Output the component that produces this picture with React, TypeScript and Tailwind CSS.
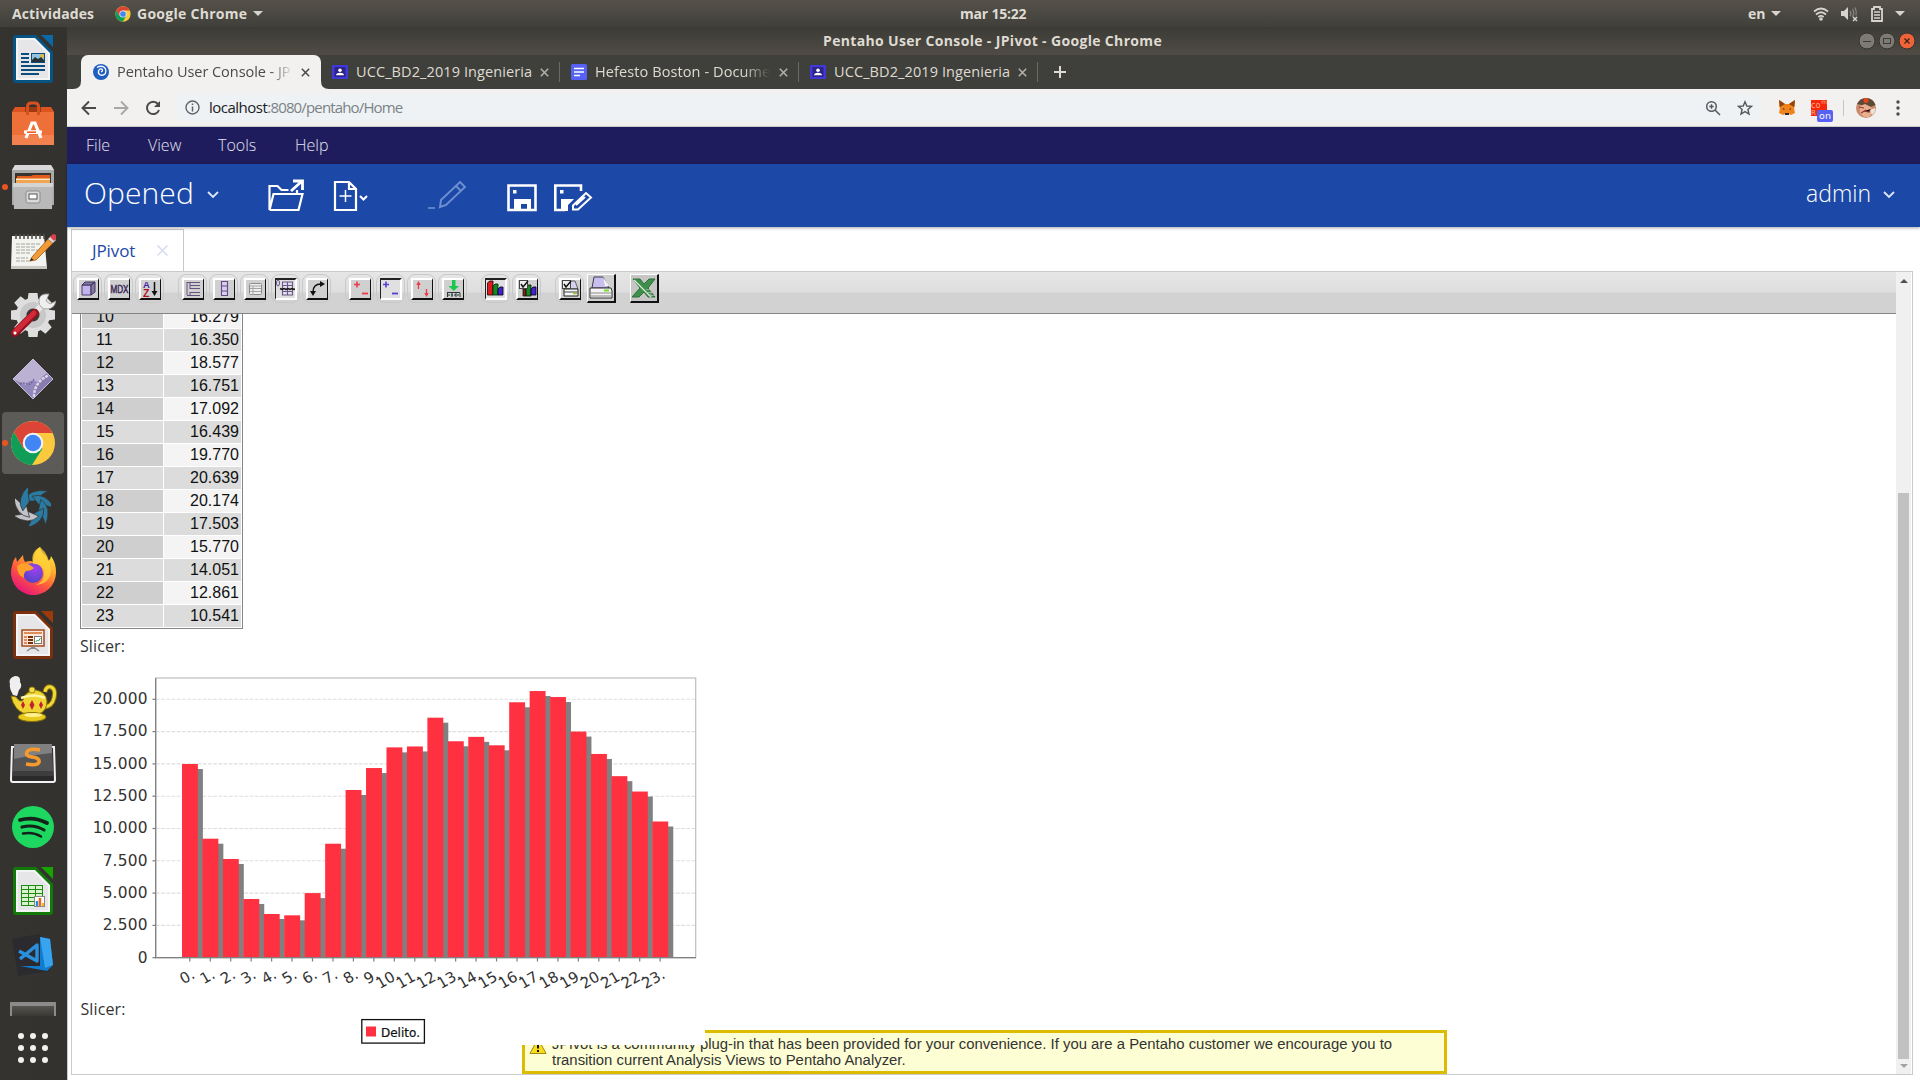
import type { ReactNode } from "react";

/* ---------- Dock icons ---------- */

function OfficeDoc({ dark, light, children }: { dark: string; light: string; children: ReactNode }) {
  return (
    <svg width="40" height="48" viewBox="0 0 40 48">
      <path d="M3 0H23L40 17V45a3 3 0 0 1-3 3H3a3 3 0 0 1-3-3V3a3 3 0 0 1 3-3Z" fill={dark} />
      <path d="M28 0H40V12Z" fill={light} />
      <path d="M3 3H22L37 18V45H3Z" fill="#f4f4f4" />
      <path d="M5 5H21L35 19V43H5Z" fill="#e6e6e8" />
      {children}
    </svg>
  );
}

function Writer() {
  return (
    <OfficeDoc dark="#075383" light="#0a6aa5">
      <path d="M8 19h8M8 23h8M8 27h8M8 31h24M8 35h24M8 39h18" stroke="#0b4d7c" strokeWidth="2" />
      <rect x="18" y="18" width="14" height="10" fill="#0b4d7c" />
      <rect x="19" y="19" width="12" height="8" fill="#8fc4e4" />
      <circle cx="29" cy="21" r="2" fill="#e8b830" />
      <path d="M19 27v-2l3-3 3 2 3-2 3 3v2Z" fill="#263238" />
    </OfficeDoc>
  );
}

function Software() {
  return (
    <svg width="42" height="44" viewBox="0 0 42 44">
      <path d="M3 6H39L42 11H0Z" fill="#9e3a12" />
      <path d="M3 6h10v5H0ZM29 6h10l3 5H29Z" fill="#dc5520" />
      <rect y="11" width="42" height="33" fill="#ee7038" />
      <rect y="34" width="42" height="10" fill="#f38150" />
      <path d="M15.500 14V6q0-4 3.500-4h4q3.500 0 3.500 4v8" fill="none" stroke="#d85020" strokeWidth="3" />
      <path d="M14 37l6-15h3l6 15M12 31h18" fill="none" stroke="#fff" strokeWidth="3.200" />
      <rect x="12.500" y="29.500" width="17" height="3.500" rx="1.700" fill="#fff" />
      <path d="M15 31.200h9" stroke="#ee5a20" strokeWidth="1.600" />
    </svg>
  );
}

function Files() {
  return (
    <svg width="42" height="44" viewBox="0 0 42 44">
      <path d="M3 0H39L42 5V40H0V5Z" fill="#a9a9a9" />
      <path d="M3 0H39L42 5H0Z" fill="#d8d8d8" />
      <rect x="3" y="8" width="36" height="12" fill="#38332f" />
      <path d="M5 11h14l2-1h17v4H5Z" fill="#e35b1d" />
      <path d="M4 13h34v5H4Z" fill="#f1a453" />
      <path d="M4 14.500h34" stroke="#fbe7cf" />
      <path d="M1 18H41L40 44H2Z" fill="#b9b9b9" />
      <path d="M1 18H41v4H1Z" fill="#d4d4d4" />
      <rect x="14" y="26" width="14" height="12" rx="2" fill="#d9d9d9" stroke="#8d8d8d" />
      <rect x="17" y="29" width="8" height="5" fill="#fff" stroke="#555" />
    </svg>
  );
}

function Notes() {
  return (
    <svg width="46" height="38" viewBox="0 0 46 38">
      <path d="M2 4H34L37 36H1Z" fill="#f3f3ef" />
      <path d="M1 34H37v3H1Z" fill="#c9c9c2" />
      <path d="M6 2v5M10 2v5M14 2v5M18 2v5M22 2v5M26 2v5M30 2v5M34 2v5" stroke="#55534f" strokeWidth="1.600" />
      <path d="M6 12h24M6 15h20M6 18h22M6 21h14M6 26h12M6 29h14" stroke="#a5a5a0" strokeDasharray="4 1" />
      <path d="M22 25L38 7l5 4L26 28l-6 1Z" fill="#f19a37" stroke="#9c5b12" strokeWidth=".8" />
      <path d="M38 7l3-3 5 4-3 3Z" fill="#dcdcdc" />
      <path d="M40 5l3-3q3 0 4 3l-3 4Z" fill="#dc4049" />
      <path d="M20 29l1.500-3 2 2Z" fill="#222" />
    </svg>
  );
}

const gearTeeth = [0, 45, 90, 135, 180, 225, 270, 315];

function Settings() {
  return (
    <svg width="46" height="46" viewBox="0 0 46 46">
      <g fill="#dedede">
        {gearTeeth.map((a) => (
          <path key={a} d="M17.500 9L18.500 1h9l1 8Z" transform={`rotate(${a} 23 23)`} />
        ))}
        <circle cx="23" cy="23" r="17" />
      </g>
      <circle cx="23" cy="23" r="13" fill="#c8c8c8" />
      <circle cx="23" cy="23" r="6.500" fill="#3a3834" />
      <path d="M24 22L32 13" stroke="#e9e9e9" strokeWidth="6" />
      <path d="M39 2Q29 1 29 9q0 8 8 8 7 0 9-8l-6 3-4-3Z" fill="#efefef" stroke="#9a9a9a" strokeWidth=".8" strokeLinejoin="round" />
      <path d="M5 41L25 21" stroke="#8e1420" strokeWidth="8" strokeLinecap="round" />
      <path d="M5 40L24 21" stroke="#d22a38" strokeWidth="5" strokeLinecap="round" />
      <circle cx="5" cy="41" r="1.500" fill="#fff" />
    </svg>
  );
}

function Diamond() {
  return (
    <svg width="42" height="42" viewBox="0 0 42 42">
      <path d="M21 1L41 21L21 41L1 21Z" fill="#9388bb" />
      <path d="M21 1L41 21L34 28Q18 18 14 27L1 21Z" fill="#bab1d3" />
      <path d="M41 21L21 41L23 30Q26 21 35 15Z" fill="#8a7cae" />
      <path d="M22 39q0-15 15-22" fill="none" stroke="#dcd6ea" strokeWidth="2.500" strokeDasharray="3 1" />
      <path d="M8 26q4-2 7 0t7-5" fill="none" stroke="#7465a0" strokeWidth="1.400" strokeDasharray="2 1" />
      <path d="M21 1L41 21L21 41L1 21Z" fill="none" stroke="#c4bddb" />
    </svg>
  );
}

function Chrome({ size }: { size: number }) {
  return (
    <svg width={size} height={size} viewBox="0 0 46 46">
      <circle cx="23" cy="23" r="22" fill="#fbc93d" />
      <path d="M23 23L13.500 28.500L4 12A22 22 0 0 0 22 45L32.500 28.500Z" fill="#0f9d58" />
      <path d="M4 12A22 22 0 0 1 42.500 13H23L13.500 28.500Z" fill="#db4437" />
      <circle cx="23" cy="23" r="10.300" fill="#f4f4f4" />
      <circle cx="23" cy="23" r="8.200" fill="#4285f4" />
    </svg>
  );
}

const blades = [0, 51, 102, 153, 204, 255, 306];

function Pinwheel() {
  return (
    <svg width="36" height="38" viewBox="0 0 36 38">
      {blades.map((a) => (
        <path
          key={a}
          d="M9 13Q14 0 33 3Q25 7 20 13Z"
          transform={`rotate(${a} 18 19)`}
          fill={a === 255 || a === 204 ? "#c2c3c8" : "#2b7aa2"}
          stroke="#33322e"
          strokeWidth=".7"
        />
      ))}
      <circle cx="18" cy="19" r="5.500" fill="#33322e" />
    </svg>
  );
}

function Firefox() {
  return (
    <svg width="46" height="48" viewBox="0 0 46 48">
      <defs>
        <linearGradient id="ff" x1=".9" y1="0" x2=".3" y2="1">
          <stop offset="0" stopColor="#fff44f" />
          <stop offset=".35" stopColor="#ffb02e" />
          <stop offset=".65" stopColor="#ff5a3c" />
          <stop offset="1" stopColor="#e5147c" />
        </linearGradient>
        <radialGradient id="fp" cx=".6" cy=".3" r=".8">
          <stop offset="0" stopColor="#a040f0" />
          <stop offset="1" stopColor="#4a45c0" />
        </radialGradient>
      </defs>
      <path d="M30 0q1 6 6 9 1 2 2 5 3-2 3-5 5 7 5 16A22.500 22.500 0 1 1 2 19q1-6 4-9l1 5 6-7q0 4 2 7 6-2 8 0Q23 5 30 0Z" fill="url(#ff)" />
      <circle cx="23" cy="26" r="10" fill="url(#fp)" />
      <path d="M7 19q6-5 13-1l4 3q-3 3-8 3-3 3-2 7-7-3-7-12Z" fill="#ffa12b" />
      <path d="M30 0q-10 5-7 17 9-1 11 8 1 9-8 13 13-1 15-13Q40 8 30 0Z" fill="#ffd53a" opacity=".75" />
    </svg>
  );
}

function Impress() {
  return (
    <OfficeDoc dark="#7a2f0d" light="#9c3a0c">
      <rect x="9" y="19" width="22" height="16" fill="#fbe9dd" stroke="#a44b1e" strokeWidth="1.500" />
      <path d="M11 22h18" stroke="#e08d5c" strokeWidth="2" />
      <path d="M11 26h3M11 29h3M11 32h3" stroke="#e8875b" strokeWidth="2" />
      <path d="M15 26h5M15 29h5M15 32h5" stroke="#7a2f0d" strokeWidth="2" />
      <rect x="21.500" y="25.500" width="7" height="7" fill="#fff" stroke="#777" />
      <path d="M22.500 31l2-2 1 1 2-3" stroke="#2ca344" fill="none" />
      <path d="M20 35v3M14 40l6-4 6 4" stroke="#888" fill="none" strokeWidth="1.500" />
    </OfficeDoc>
  );
}

function Teapot() {
  return (
    <svg width="48" height="48" viewBox="0 0 48 48">
      <path d="M4 20Q0 14 1 9-1 3 6 1q6 0 5 6 3 4-1 8l-2 6Z" fill="#efefef" />
      <path d="M36 17q1-6 6-5 5 2 3 11-2 9-11 9" fill="none" stroke="#8a7306" strokeWidth="5" />
      <path d="M36 17q1-6 6-5 5 2 3 11-2 9-11 9" fill="none" stroke="#f0d838" strokeWidth="3" />
      <path d="M2 21l5 1q4 6 7 3 2-9 13-10 10 2 11 11 0 10-8 13H16Q5 35 2 21Z" fill="#efd433" stroke="#8a7306" />
      <ellipse cx="23" cy="42" rx="14" ry="4.500" fill="#e8c91d" stroke="#8a7306" />
      <ellipse cx="24" cy="40" rx="9" ry="2" fill="#fff08a" />
      <path d="M12 23q13-5 24 0" fill="none" stroke="#fff6a6" strokeWidth="2.500" />
      <circle cx="23" cy="15" r="3" fill="#f4de4c" stroke="#a08a10" />
      <path d="M14 26l2 4-2 4-2-4ZM23 25l2.500 5-2.500 5-2.500-5ZM32 26l2 4-2 4-2-4Z" fill="#c4202c" />
    </svg>
  );
}

function Sublime() {
  return (
    <svg width="46" height="40" viewBox="0 0 46 40">
      <path d="M2 4H44L45 37q0 2-2 2H3q-2 0-2-2Z" fill="#2a2a2a" stroke="#f2f2f2" strokeWidth="2" />
      <path d="M4 1H42L43 28H3Z" fill="#545454" />
      <path d="M4 1H42V10Q20 12 4 16Z" fill="#808080" />
      <path d="M3 28H43v5H3Z" fill="#3d3d3d" />
      <path d="M30 7Q19 5 17 9t5 5q8 1 7 5t-13 2" fill="none" stroke="#f79a2e" strokeWidth="3.600" />
    </svg>
  );
}

function Spotify() {
  return (
    <svg width="42" height="42" viewBox="0 0 42 42">
      <circle cx="21" cy="21" r="21" fill="#1ed760" />
      <g fill="none" stroke="#14231a" strokeLinecap="round">
        <path d="M8 14q14-4 27 3" strokeWidth="3.800" />
        <path d="M10 21q12-3 22 3" strokeWidth="3.200" />
        <path d="M11 27.500q10-2 18 3" strokeWidth="2.600" />
      </g>
    </svg>
  );
}

function Calc() {
  return (
    <OfficeDoc dark="#13780a" light="#18a303">
      <rect x="8" y="18" width="22" height="21" fill="#1f8a12" />
      <g fill="#d9f3cf">
        {[19, 23, 27, 31, 35].map((y) => (
          <g key={y}>
            <rect x="9" y={y} width="6" height="3" />
            <rect x="16" y={y} width="6" height="3" />
            <rect x="23" y={y} width="6" height="3" />
          </g>
        ))}
      </g>
      <rect x="21.500" y="29.500" width="10" height="10" fill="#fff" stroke="#888" />
      <path d="M24 39v-5" stroke="#2f86d0" strokeWidth="2.500" />
      <path d="M27 39v-8" stroke="#e8641b" strokeWidth="2.500" />
      <path d="M30 39v-3" stroke="#f2b52a" strokeWidth="2" />
    </OfficeDoc>
  );
}

function VsCode() {
  return (
    <svg width="42" height="44" viewBox="0 0 42 44">
      <path d="M0 6L28 1L38 38L6 43Z" fill="#2b2a2e" />
      <path d="M28 4L38 6 41 32 35 38 8 33H28Z" fill="#0f7ccd" />
      <path d="M28 4L38 6 41 32 33 35Z" fill="#38a3ee" />
      <path d="M7 18l18 10V12L8 26" fill="none" stroke="#2a8fdc" strokeWidth="3.500" strokeLinejoin="round" />
    </svg>
  );
}

const dockIcons: { name: string; icon: ReactNode; running?: boolean; active?: boolean }[] = [
  { name: "writer", icon: <Writer /> },
  { name: "software", icon: <Software /> },
  { name: "files", icon: <Files />, running: true },
  { name: "notes", icon: <Notes /> },
  { name: "settings", icon: <Settings /> },
  { name: "diamond", icon: <Diamond /> },
  { name: "chrome", icon: <Chrome size={46} />, running: true, active: true },
  { name: "pinwheel", icon: <Pinwheel /> },
  { name: "firefox", icon: <Firefox /> },
  { name: "impress", icon: <Impress /> },
  { name: "teapot", icon: <Teapot /> },
  { name: "sublime", icon: <Sublime /> },
  { name: "spotify", icon: <Spotify /> },
  { name: "calc", icon: <Calc /> },
  { name: "vscode", icon: <VsCode /> },
];

function Dock() {
  return (
    <aside className="flex w-[67px] shrink-0 flex-col bg-linear-to-r from-[#34332f] to-[#33322e] pr-px">
      {dockIcons.map((d) => (
        <div key={d.name} className="relative flex h-16 items-center justify-center">
          {d.running && <span className="absolute left-[2px] top-[29px] z-10 size-[6px] rounded-full bg-[#e95420]" />}
          <div className={d.active ? "flex size-[62px] items-center justify-center rounded-[4px] bg-[#5c5b58]" : "flex size-[62px] items-center justify-center"}>
            {d.icon}
          </div>
        </div>
      ))}
      <div className="mx-auto mt-[15px] h-[14px] w-[46px] border-x-2 border-t-4 border-[#8c8b89] bg-linear-to-b from-[#55544f] to-[#3a3935]" />
      <div className="mx-auto mt-[17px] grid grid-cols-3 gap-[6px]">
        {[0, 1, 2, 3, 4, 5, 6, 7, 8].map((i) => (
          <span key={i} className="size-[6px] rounded-full bg-[#f2f1f0]" />
        ))}
      </div>
    </aside>
  );
}

/* ---------- System bar ---------- */

function Caret() {
  return (
    <svg width="10" height="5" viewBox="0 0 10 5" className="shrink-0">
      <path d="M0 0H10L5 5Z" fill="#d6d3cc" />
    </svg>
  );
}

function SystemBar() {
  return (
    <header className="flex h-[27px] items-center bg-linear-to-b from-[#56524b] to-[#403f3a] font-['Open_Sans'] text-[14px] font-bold text-[#dfdbd2]">
      <span className="ml-[12px] w-[103px] tracking-[0.12px]">Actividades</span>
      <Chrome size={16} />
      <span className="ml-[6px] w-[116px] tracking-[0.28px]">Google Chrome</span>
      <Caret />
      <span className="ml-[697px] w-[788px] tracking-[-0.2px]">mar 15:22</span>
      <span className="w-[23px]">en</span>
      <Caret />
      <svg width="16" height="14" viewBox="0 0 16 14" className="ml-[32px]">
        <g fill="none" stroke="#d6d3cc" strokeWidth="1.700">
          <path d="M1 4.500Q8-1.500 15 4.500M3 7.500Q8 3 13 7.500M5.300 10Q8 7.800 10.700 10" />
        </g>
        <circle cx="8" cy="12" r="1.800" fill="#d6d3cc" />
      </svg>
      <svg width="17" height="16" viewBox="0 0 17 16" className="ml-[12px]">
        <path d="M0 5h3l4-4v13l-4-4H0Z" fill="#d6d3cc" />
        <path d="M9 5q2 3 0 5M11.500 3q2.500 4 0 8M14 1.500q2 4 1 8" fill="none" stroke="#85827c" strokeWidth="1.400" />
        <path d="M12 11l4 4M16 11l-4 4" stroke="#d6d3cc" strokeWidth="1.500" />
      </svg>
      <svg width="12" height="16" viewBox="0 0 12 16" className="ml-[13px]">
        <path d="M3 1h6v2h2v12H1V3h2Z" fill="none" stroke="#d6d3cc" strokeWidth="1.800" />
        <path d="M3 6h6M3 9h6M3 12h6" stroke="#d6d3cc" strokeWidth="1.600" />
      </svg>
      <span className="ml-[12px]">
        <Caret />
      </span>
    </header>
  );
}

/* ---------- Browser chrome ---------- */

function TitleBar() {
  return (
    <div className="flex h-[28px] items-center bg-linear-to-b from-[#3c3b37] to-[#504c45] font-['Open_Sans'] text-[14px] font-bold text-[#dfdbd2]">
      <span className="ml-[756px] w-[1035px] whitespace-nowrap pb-[2px] tracking-[0.34px]">Pentaho User Console - JPivot - Google Chrome</span>
      <svg width="58" height="18" viewBox="0 0 58 18">
        <circle cx="9" cy="9" r="8" fill="#7d7a73" stroke="#33322e" />
        <path d="M5 9.500h8" stroke="#3c3b37" />
        <circle cx="29" cy="9" r="8" fill="#7d7a73" stroke="#33322e" />
        <rect x="25.500" y="6.500" width="7" height="5" fill="none" stroke="#3c3b37" />
        <circle cx="49" cy="9" r="8" fill="#ee6338" stroke="#33322e" />
        <path d="M46.500 6.500l5 5M51.500 6.500l-5 5" stroke="#3c2017" strokeWidth="1.200" />
      </svg>
    </div>
  );
}

function CloseX({ color }: { color: string }) {
  return (
    <svg width="9" height="9" viewBox="0 0 9 9" className="shrink-0">
      <path d="M.8.8l7.400 7.400M8.200.8L.8 8.200" stroke={color} strokeWidth="1.500" />
    </svg>
  );
}

function ClassroomIcon() {
  return (
    <svg width="16" height="14" viewBox="0 0 16 14" className="shrink-0">
      <rect width="16" height="14" rx="1" fill="#4038d8" />
      <rect x="2.500" y="2" width="11" height="10" fill="#2c2486" />
      <circle cx="8" cy="5.300" r="1.800" fill="#fff" />
      <path d="M4 10.200q0-2.500 4-2.500t4 2.500Z" fill="#fff" />
    </svg>
  );
}

function DocsIcon() {
  return (
    <svg width="16" height="16" viewBox="0 0 16 16" className="shrink-0">
      <rect width="16" height="16" rx="1.500" fill="#5661f6" />
      <path d="M3 4.500h10M3 8h10M3 11.500h6" stroke="#fff" strokeWidth="1.700" />
    </svg>
  );
}

function Tab({ icon, title, fade }: { icon: ReactNode; title: string; fade?: boolean }) {
  return (
    <div className="flex w-[239px] items-center pl-[11px]">
      {icon}
      <span
        className={
          fade
            ? "ml-[8px] w-[177px] whitespace-nowrap tracking-[0.1px] [mask-image:linear-gradient(to_right,black_84%,transparent_99%)]"
            : "ml-[8px] w-[177px] whitespace-nowrap tracking-[0.1px]"
        }
      >
        {title}
      </span>
      <span className="ml-[7px]">
        <CloseX color="#b5b2ab" />
      </span>
      <span className="ml-auto h-[20px] w-px bg-[#6b6964]" />
    </div>
  );
}

function TabStrip() {
  return (
    <div className="flex h-[34px] bg-[#3f403b] font-['Open_Sans'] text-[14.500px] text-[#dfdbd2]">
      <div className="relative ml-[14px] flex w-[240px] items-center rounded-t-[7px] bg-[#f2f1f0] pl-[12px] text-[#4a4a48]">
        <svg width="8" height="8" viewBox="0 0 8 8" className="absolute -left-[8px] bottom-0">
          <path d="M8 0v8H0Q8 8 8 0Z" fill="#f2f1f0" />
        </svg>
        <svg width="8" height="8" viewBox="0 0 8 8" className="absolute -right-[8px] bottom-0">
          <path d="M0 0v8h8Q0 8 0 0Z" fill="#f2f1f0" />
        </svg>
        <svg width="16" height="16" viewBox="0 0 16 16" className="shrink-0">
          <circle cx="8" cy="8" r="8" fill="#1f5fc0" />
          <path d="M8 8q2-1 1.500-2.200Q8 4 6 6q-1.500 2.500.5 4.500 3 1.800 5.500-.5 2-3.500-.5-6.500Q8 1 4 3.500" fill="none" stroke="#fff" strokeWidth="1.300" />
        </svg>
        <span className="ml-[8px] w-[177px] whitespace-nowrap tracking-[-0.05px] [mask-image:linear-gradient(to_right,black_86%,transparent_100%)]">
          Pentaho User Console - JP
        </span>
        <span className="ml-[7px]">
          <CloseX color="#4a4a48" />
        </span>
      </div>
      <Tab icon={<ClassroomIcon />} title="UCC_BD2_2019 Ingenieria" />
      <Tab icon={<DocsIcon />} title="Hefesto Boston - Docume" fade />
      <Tab icon={<ClassroomIcon />} title="UCC_BD2_2019 Ingenieria" />
      <svg width="12" height="12" viewBox="0 0 12 12" className="ml-[16px] self-center">
        <path d="M6 0v12M0 6h12" stroke="#dfdbd2" strokeWidth="2" />
      </svg>
    </div>
  );
}

function AddressBar() {
  return (
    <div className="flex h-[38px] items-center border-b border-[#c9cbc6] bg-[#f2f1f0] font-['Open_Sans'] text-[15px]">
      <svg width="86" height="18" viewBox="0 0 86 18" className="ml-[13px]">
        <path d="M16 9H3M9 2.500L2.500 9L9 15.500" fill="none" stroke="#4a4a48" strokeWidth="1.900" />
        <path d="M34 9h13M41 2.500L47.500 9L41 15.500" fill="none" stroke="#a8a7a5" strokeWidth="1.900" />
        <path d="M78 5A6.200 6.200 0 1 0 79 11" fill="none" stroke="#4a4a48" strokeWidth="2" />
        <path d="M80 2v6h-6Z" fill="#4a4a48" />
      </svg>
      <div className="ml-[9px] flex h-[29px] w-[1587px] items-center rounded-full bg-[#eef2f4] pl-[10px]">
        <svg width="15" height="15" viewBox="0 0 15 15">
          <circle cx="7.500" cy="7.500" r="6.500" fill="none" stroke="#5f6368" strokeWidth="1.400" />
          <path d="M7.500 6.500v5M7.500 3.500v1.600" stroke="#5f6368" strokeWidth="1.500" />
        </svg>
        <span className="ml-[9px] tracking-[-0.85px] text-[#7b8287]">
          <span className="tracking-[-0.5px] text-[#202124]">localhost</span>:8080/pentaho/Home
        </span>
        <svg width="16" height="16" viewBox="0 0 16 16" className="ml-auto">
          <circle cx="6.500" cy="6.500" r="4.800" fill="none" stroke="#55595d" strokeWidth="1.500" />
          <path d="M10 10l5 5M6.500 4.300v4.400M4.300 6.500h4.400" stroke="#55595d" strokeWidth="1.500" />
        </svg>
        <svg width="16" height="16" viewBox="0 0 16 16" className="ml-[16px] mr-[9px]">
          <path d="M8 1.800l1.800 4.200 4.700.4-3.600 3 1.100 4.600L8 11.600 4 14l1.100-4.600-3.600-3 4.700-.4Z" fill="none" stroke="#55595d" strokeWidth="1.400" />
        </svg>
      </div>
      <svg width="18" height="18" viewBox="0 0 18 18" className="ml-[16px]">
        <path d="M1 1l6 4h4l6-4v6l-1 2 1 5-4 2-2-1H7l-2 1-4-2 1-5-1-2Z" fill="#f0831b" />
        <path d="M1 1l6 4-5 3ZM17 1l-6 4 5 3Z" fill="#8b4513" />
        <path d="M5 9l2 1.500H5ZM13 9l-2 1.500h2Z" fill="#2b2b40" />
        <path d="M7 14h4v2H7Z" fill="#2b2b40" />
      </svg>
      <div className="relative ml-[15px] size-[16px] shrink-0 bg-[#f5280c] font-['DejaVu_Sans'] text-[8px] leading-[8px] text-[#ffb08a]">
        <span className="absolute left-0 top-[2px]">co</span>
        <span className="absolute right-0 top-[-2px] text-[6px]">m</span>
        <span className="absolute left-0 top-[9px] text-[7px]">R</span>
        <span className="absolute left-[6px] top-[10px] flex h-[12px] w-[16px] items-center justify-center rounded-[2px] bg-[#5661f6] text-[9.500px] text-white">on</span>
      </div>
      <span className="ml-[16px] h-[16px] w-px bg-[#c4c4c4]" />
      <svg width="20" height="20" viewBox="0 0 20 20" className="ml-[12px]">
        <circle cx="10" cy="10" r="10" fill="#c98a6c" />
        <path d="M1 6q3-6 9-6 7 0 9.500 7l-5 2-9-2Z" fill="#5b4a35" />
        <circle cx="10" cy="2.500" r="2.500" fill="#e9431d" />
        <path d="M4 8l5-2 6 3 2 5-4 5H8l-4-4Z" fill="#e8ae90" />
        <path d="M3 9l5 1M8 13l5 1 2-3M5 15l5-3" stroke="#94382a" strokeWidth="1.200" />
        <path d="M14 12l5-2q1 4-3 7Z" fill="#e9e4d8" />
      </svg>
      <svg width="4" height="16" viewBox="0 0 4 16" className="ml-[20px]">
        <g fill="#4a4a48">
          <circle cx="2" cy="2" r="1.700" />
          <circle cx="2" cy="8" r="1.700" />
          <circle cx="2" cy="14" r="1.700" />
        </g>
      </svg>
    </div>
  );
}

/* ---------- Application header ---------- */

function MenuBar() {
  return (
    <nav className="flex h-[37px] items-center bg-[#1e1c5c] pb-[2px] font-['Open_Sans'] text-[16px] font-light text-[#e4e4f0]">
      <span className="ml-[19px] w-[62px]">File</span>
      <span className="w-[70px]">View</span>
      <span className="w-[77px]">Tools</span>
      <span>Help</span>
    </nav>
  );
}

function Chevron() {
  return (
    <svg width="12" height="8" viewBox="0 0 12 8" className="shrink-0">
      <path d="M1 1l5 5 5-5" fill="none" stroke="#dfe6f5" strokeWidth="1.800" />
    </svg>
  );
}

function ActionBar() {
  return (
    <div className="relative z-10 flex h-[63px] shrink-0 items-center bg-[#1c49a8] pb-[2px] font-['Open_Sans'] font-light text-white shadow-[0_1px_3px_rgba(0,0,0,0.35)]">
      <span className="ml-[17px] w-[123px] pb-[4px] text-[30px] leading-[40px] tracking-[0.1px]">Opened</span>
      <Chevron />
      <svg width="326" height="34" viewBox="268 178 326 34" className="ml-[49px]" fill="none" stroke="#fff" strokeWidth="2.200">
        <path d="M269.500 210V186h8l4 4h7M269.500 210h29l4-16h-29l-4 16M297 190v4" />
        <path d="M291 191l10-9M293 181h9.500v9" strokeWidth="2.800" />
        <path d="M335 182h14l7 7v21h-21ZM349 182v7h7" />
        <path d="M339.500 196h12M345.500 190v12" strokeWidth="1.500" />
        <path d="M360 196l3.500 3.500 3.500-3.500" strokeWidth="2" />
        <g stroke="#6f8fd0">
          <path d="M440 207l1-7 19-18 5 5-19 18ZM456 186l5 5" strokeWidth="1.900" />
          <path d="M428 208h7" strokeWidth="1.600" />
        </g>
        <path d="M508.500 185.500h27v24.500h-27Z" strokeWidth="2.600" />
        <path d="M514 211v-12h17v12h-4v-7h-6v7Z" fill="#fff" stroke="none" />
        <path d="M513 190h3.500v3.500H513Z" fill="#fff" stroke="none" />
        <path d="M581 191v-5.500H555.300V210h10" strokeWidth="2.600" />
        <path d="M561 211v-12h13l-6 6v6Z" fill="#fff" stroke="none" />
        <path d="M560 190h3.500v3.500H560Z" fill="#fff" stroke="none" />
        <path d="M573 209.500v-4l13-12.500 5 4.500-13 12ZM576 205l9-8" strokeWidth="2" />
      </svg>
      <span className="ml-auto pb-[3px] text-[23px]">admin</span>
      <span className="ml-[12px] mr-[25px] pt-px">
        <Chevron />
      </span>
    </div>
  );
}

/* ---------- Pivot toolbar ---------- */

function ToolButton({ pressed, children }: { pressed?: boolean; children: ReactNode }) {
  return (
    <span className="mr-[2px] flex size-[29px] items-center justify-center rounded-[8px] border border-[#c9c9c9]">
      <span
        className={
          pressed
            ? "flex size-[22px] items-center justify-center border-b-2 border-l border-r-2 border-t-2 border-b-white border-l-[#222] border-r-white border-t-[#222] bg-[#e0e0e0]"
            : "flex size-[22px] items-center justify-center border-b-2 border-l-2 border-r border-t-2 border-b-[#111] border-l-white border-r-[#111] border-t-white bg-[#d0d0d0]"
        }
      >
        <svg width="19" height="19" viewBox="0 0 19 19" className="shrink-0">
          {children}
        </svg>
      </span>
    </span>
  );
}

function PivotToolbar() {
  return (
    <div className="h-[42px] border-b border-[#858585] bg-linear-to-b from-[#e6e6e6] from-0% via-[#dedede] via-48% to-[#d2d2d2] to-52%">
      <div className="flex pl-[1px] pt-[2px]">
        <ToolButton>
          <path d="M3 6h9v10H3Z" fill="#c0b4ea" stroke="#4b3e78" />
          <path d="M3 6l3-3h10l-4 3ZM16 3v10l-4 3V6Z" fill="#85789f" stroke="#3e3560" />
        </ToolButton>
        <ToolButton>
          <text x=".5" y="13.500" fontFamily="Liberation Sans" fontSize="11" fill="#3d2a56" stroke="#3d2a56" strokeWidth=".5" textLength="18" lengthAdjust="spacingAndGlyphs">
            MDX
          </text>
        </ToolButton>
        <ToolButton>
          <text x="2" y="9" fontFamily="Liberation Sans" fontSize="9.500" fontWeight="bold" fill="#4225a0">
            A
          </text>
          <text x="2" y="17.500" fontFamily="Liberation Sans" fontSize="10.500" fontWeight="bold" fill="#b01020">
            Z
          </text>
          <path d="M13.500 3v11" stroke="#111" strokeWidth="1.500" />
          <path d="M10.500 12h6l-3 5Z" fill="#111" />
        </ToolButton>
        <span className="w-[12px]" />
        <ToolButton>
          <path d="M3 3.500h13M3 3v13M3 16.500h13M6 6.500h10M6 9.500h10M6 13.500h10M6 3v7M6 13v4" stroke="#62537f" fill="none" />
        </ToolButton>
        <ToolButton>
          <path d="M6.500 2.500h6v14h-6ZM6.500 7h6M6.500 12h6" stroke="#62488c" fill="#d7d0e6" strokeWidth="1.100" />
        </ToolButton>
        <ToolButton>
          <rect x="3.500" y="4.500" width="12" height="11" rx="1" fill="#eee" stroke="#8b8b8b" />
          <path d="M4 7h11M4 9.500h11M4 12.500h11M7 7v9" stroke="#a5a5a5" />
        </ToolButton>
        <ToolButton pressed>
          <path d="M6.500 3h10v13h-10ZM6.500 6.500h10M6.500 12.500h10M11.500 3v13" stroke="#6a5592" fill="none" strokeWidth="1.100" />
          <ellipse cx="2" cy="4" rx="1.500" ry="3" stroke="#6a5592" fill="none" />
          <path d="M4 9.500l2 1 2-1 2 1 2-1 2 1 2-1 2 1 2-1" stroke="#111" fill="none" strokeWidth="1.500" />
        </ToolButton>
        <ToolButton>
          <path d="M5 13Q5 5 13 5" stroke="#111" fill="none" strokeWidth="1.400" />
          <path d="M12 2l5 3-5 3ZM2 12h6l-3 5Z" fill="#111" />
        </ToolButton>
        <span className="w-[12px]" />
        <ToolButton>
          <path d="M3 5.500h6M6 2.500v6" stroke="#f03848" strokeWidth="1.600" />
          <path d="M11 14.500h6" stroke="#f03848" strokeWidth="1.800" />
        </ToolButton>
        <ToolButton pressed>
          <path d="M2 5.500h6M5 2.500v6" stroke="#5a3cd8" strokeWidth="1.600" />
          <path d="M11 14.500h6" stroke="#5a3cd8" strokeWidth="1.800" />
        </ToolButton>
        <ToolButton>
          <path d="M5.500 4v6M13.500 10v6" stroke="#f03848" strokeWidth="1.300" />
          <path d="M3.300 6l2.200-4L7.700 6ZM11.300 14h4.400l-2.200 4Z" fill="#f03848" />
        </ToolButton>
        <ToolButton>
          <path d="M8 1h3.500v6H15l-5.200 5L4.500 7H8Z" fill="#18c84c" />
          <path d="M3 13.500h13M3.500 14v4M8 14v4M12 14v4M16 14v4" stroke="#273b35" fill="none" />
          <path d="M4 16h12" stroke="#273b35" strokeDasharray="2 1" />
        </ToolButton>
        <span className="w-[12px]" />
        <ToolButton pressed>
          <path d="M1.500 4l2-2H7v14H1.500Z" fill="#d81c20" stroke="#200" strokeWidth=".8" />
          <path d="M7 7l2-2h3v11H7Z" fill="#128a22" stroke="#020" strokeWidth=".8" />
          <path d="M12 10l2-2h3v8h-5Z" fill="#4821c8" stroke="#002" strokeWidth=".8" />
        </ToolButton>
        <ToolButton>
          <path d="M5 10h3v7H5Z" fill="#8a2222" stroke="#020" strokeWidth=".8" />
          <path d="M8 8l2-2h3v11H8Z" fill="#128a22" stroke="#200" strokeWidth=".8" />
          <path d="M13 10l2-2h3v8h-5Z" fill="#4821c8" stroke="#002" strokeWidth=".8" />
          <rect x="1.500" y="1.500" width="8" height="8" fill="#eee" stroke="#444" />
          <path d="M3 5l2 3 5-6" fill="none" stroke="#111" strokeWidth="1.400" />
        </ToolButton>
        <span className="w-[12px]" />
        <ToolButton>
          <path d="M9 2h5l3 8H9Z" fill="#d6d0ee" stroke="#444" strokeWidth=".8" />
          <path d="M3 10h14v7H3Z" fill="#f6f6f6" stroke="#222" />
          <path d="M3 13h14" stroke="#444" />
          <path d="M12 14.500h4" stroke="#9c2" strokeWidth="1.500" />
          <rect x="1.500" y="1.500" width="8" height="8" fill="#eee" stroke="#444" />
          <path d="M3 5l2 3 5-6" fill="none" stroke="#111" strokeWidth="1.400" />
        </ToolButton>
        <span className="ml-px flex size-[29px] items-center justify-center border-b-2 border-l border-r-2 border-t border-b-[#111] border-l-white border-r-[#111] border-t-white bg-[#cfcfcf]">
          <svg width="26" height="26" viewBox="0 0 26 26">
            <path d="M6 2h9l6 11H4Z" fill="#c9bfef" stroke="#3f3a55" />
            <path d="M15 2l6 9h-4Z" fill="#f4f4f4" />
            <path d="M2 13h21l1 3v7H2Z" fill="#f4f4f4" stroke="#333" />
            <path d="M2 18h22M3 21h20" stroke="#888" />
            <path d="M16 15.500h5" stroke="#7ddc2a" strokeWidth="2" />
          </svg>
        </span>
        <span className="ml-[14px] flex size-[29px] items-center justify-center border-b-2 border-l border-r-2 border-t border-b-[#111] border-l-white border-r-[#111] border-t-white bg-[#c6c6c6]">
          <svg width="26" height="26" viewBox="0 0 26 26">
            <path d="M2 4h7l4 5 5-5h6l-7 9 7 9h-7l-4-5-5 5H1l8-9Z" fill="#3f8f4c" stroke="#2c6f38" />
            <path d="M3 5l17 17" stroke="#d9ecd9" strokeWidth="1.300" />
            <path d="M15 14.500h9M15 17.500h9M17 20.500h7M20 12v11" stroke="#c6c6c6" strokeWidth=".6" />
          </svg>
        </span>
      </div>
    </div>
  );
}

/* ---------- Data ---------- */

const rows: [number, string][] = [
  [10, "16.279"],
  [11, "16.350"],
  [12, "18.577"],
  [13, "16.751"],
  [14, "17.092"],
  [15, "16.439"],
  [16, "19.770"],
  [17, "20.639"],
  [18, "20.174"],
  [19, "17.503"],
  [20, "15.770"],
  [21, "14.051"],
  [22, "12.861"],
  [23, "10.541"],
];

const values = [
  14990, 9210, 7640, 4543, 3382, 3280, 5000, 8823, 12980, 14680, 16279, 16350, 18577, 16751, 17092, 16439, 19770, 20639, 20174, 17503, 15770,
  14051, 12861, 10541,
];

const axis = ["0", "2.500", "5.000", "7.500", "10.000", "12.500", "15.000", "17.500", "20.000"];

function PivotTable() {
  return (
    <div className="-mt-[10px] flex w-[163px] flex-col gap-px border border-[#858585] p-px font-['Liberation_Sans'] text-[16px] leading-[21px] text-[#111]">
      {rows.map(([hour, count]) => (
        <div key={hour} className="flex h-[22px] gap-px">
          <span className={hour % 2 ? "w-[81px] bg-[#dcdcdc] pl-[14px]" : "w-[81px] bg-[#cfcfcf] pl-[14px]"}>{hour}</span>
          <span className={hour % 2 ? "flex-1 bg-[#dcdcdc] pr-[2px] text-right" : "flex-1 bg-[#f4f4f4] pr-[2px] text-right"}>{count}</span>
        </div>
      ))}
    </div>
  );
}

function Chart() {
  const base = 957.7;
  const perUnit = 32.3 / 2500;
  return (
    <svg width="625" height="375" viewBox="80 670 625 375" className="relative z-10 block bg-white" fontFamily="DejaVu Sans">
      <rect x="155.700" y="678" width="540" height="279.700" fill="none" stroke="#c0c0c0" strokeWidth="1.250" />
      {axis.map((label, i) => {
        const y = base - i * 32.3;
        return (
          <g key={label}>
            {i > 0 && <path d={`M156 ${y}H695`} stroke="#dedede" strokeWidth="1.100" strokeDasharray="3.700 1.500" />}
            <path d={`M152.500 ${y}H156`} stroke="#808080" strokeWidth="1.250" />
            <text x="147.700" y={y + 4.8} textAnchor="end" fontSize="15.400" letterSpacing=".2" fill="#333">
              {label}
            </text>
          </g>
        );
      })}
      {values.map((v, i) => {
        const x = 182 + i * 20.45;
        const h = v * perUnit;
        return (
          <g key={i}>
            <rect x={x + 5} y={base - h + 5} width="15.900" height={h - 5} fill="#808080" />
            <rect x={x} y={base - h} width="15.900" height={h} fill="#ff3040" />
          </g>
        );
      })}
      <path d="M155.700 678V957.700H696" fill="none" stroke="#808080" strokeWidth="1.250" />
      {values.map((_, i) => {
        const x = 189.8 + i * 20.45;
        return (
          <g key={i}>
            <path d={`M${x} 958v3.500`} stroke="#808080" strokeWidth="1.250" />
            <text transform={`translate(${x + 6} 977.300) rotate(-30)`} textAnchor="end" fontSize="15" fill="#333">
              {`${i}.`}
            </text>
          </g>
        );
      })}
      <text x="80.500" y="1015" fontFamily="Open Sans" fontSize="16" fill="#333" letterSpacing=".1">
        Slicer:
      </text>
      <rect x="361.800" y="1019.600" width="62.600" height="23.500" fill="#fff" stroke="#111" strokeWidth="1.300" />
      <rect x="366" y="1026.500" width="10" height="10" fill="#ff3040" />
      <text x="381" y="1036.500" fontSize="12" fill="#111" stroke="#111" strokeWidth=".2">
        Delito.
      </text>
    </svg>
  );
}

function Warning() {
  return (
    <div className="-mt-[15px] ml-[442px] flex h-[44px] w-[925px] border-[3px] border-[#dcbc00] bg-[#fdfed4] font-['Liberation_Sans'] text-[14.880px] leading-[16px] text-[#333]">
      <svg width="18" height="18" viewBox="0 0 18 18" className="ml-[4px] mt-[4px] shrink-0">
        <path d="M9 1.500L17 16.500H1Z" fill="#f8dc1c" stroke="#a38a10" strokeLinejoin="round" />
        <path d="M9 6v5.500M9 13v2" stroke="#111" strokeWidth="2" />
      </svg>
      <p className="ml-[5px] mt-[3px] whitespace-nowrap">
        JPivot is a community plug-in that has been provided for your convenience. If you are a Pentaho customer we encourage you to
        <br />
        transition current Analysis Views to Pentaho Analyzer.
      </p>
    </div>
  );
}

function Scrollbar() {
  return (
    <div className="mr-px flex w-[15px] shrink-0 flex-col items-center bg-[#f0f0f0]">
      <svg width="8" height="4" viewBox="0 0 8 4" className="mt-[7px]">
        <path d="M4 0L8 4H0Z" fill="#505050" />
      </svg>
      <div className="mt-[210px] h-[566px] w-[11px] bg-[#c1c1c1]" />
      <svg width="8" height="4" viewBox="0 0 8 4" className="mt-[5px]">
        <path d="M0 0H8L4 4Z" fill="#a0a0a0" />
      </svg>
    </div>
  );
}

function Workspace() {
  return (
    <div className="flex min-h-0 flex-1 flex-col border-l border-[#b9cdd2] bg-white pb-[5px] pl-[3px] pr-[7px] pt-[2px]">
      <div className="flex h-[42px] w-[113px] items-center border-x border-t border-[#c8c8c8] font-['Open_Sans'] text-[17px] text-[#1c49a8]">
        <span className="ml-[20px] w-[65px] tracking-[-0.1px]">JPivot</span>
        <svg width="11" height="11" viewBox="0 0 11 11">
          <path d="M.5.500l10 10M10.500.500l-10 10" stroke="#d6dcef" strokeWidth="1.500" />
        </svg>
      </div>
      <div className="flex min-h-0 flex-1 border border-[#cacaca]">
        <div className="flex min-w-0 flex-1 flex-col">
          <PivotToolbar />
          <div className="min-h-0 flex-1 overflow-hidden pl-[8px]">
            <PivotTable />
            <div className="flex h-[41px] items-center pb-[8px] font-['Open_Sans'] text-[16px] tracking-[0.1px] text-[#333]">Slicer:</div>
            <Chart />
            <Warning />
          </div>
        </div>
        <Scrollbar />
      </div>
    </div>
  );
}

export default function App() {
  return (
    <div className="flex h-[1080px] w-[1920px] flex-col overflow-hidden bg-white">
      <SystemBar />
      <div className="flex min-h-0 flex-1">
        <Dock />
        <main className="flex min-w-0 flex-1 flex-col">
          <TitleBar />
          <TabStrip />
          <AddressBar />
          <MenuBar />
          <ActionBar />
          <Workspace />
        </main>
      </div>
    </div>
  );
}
